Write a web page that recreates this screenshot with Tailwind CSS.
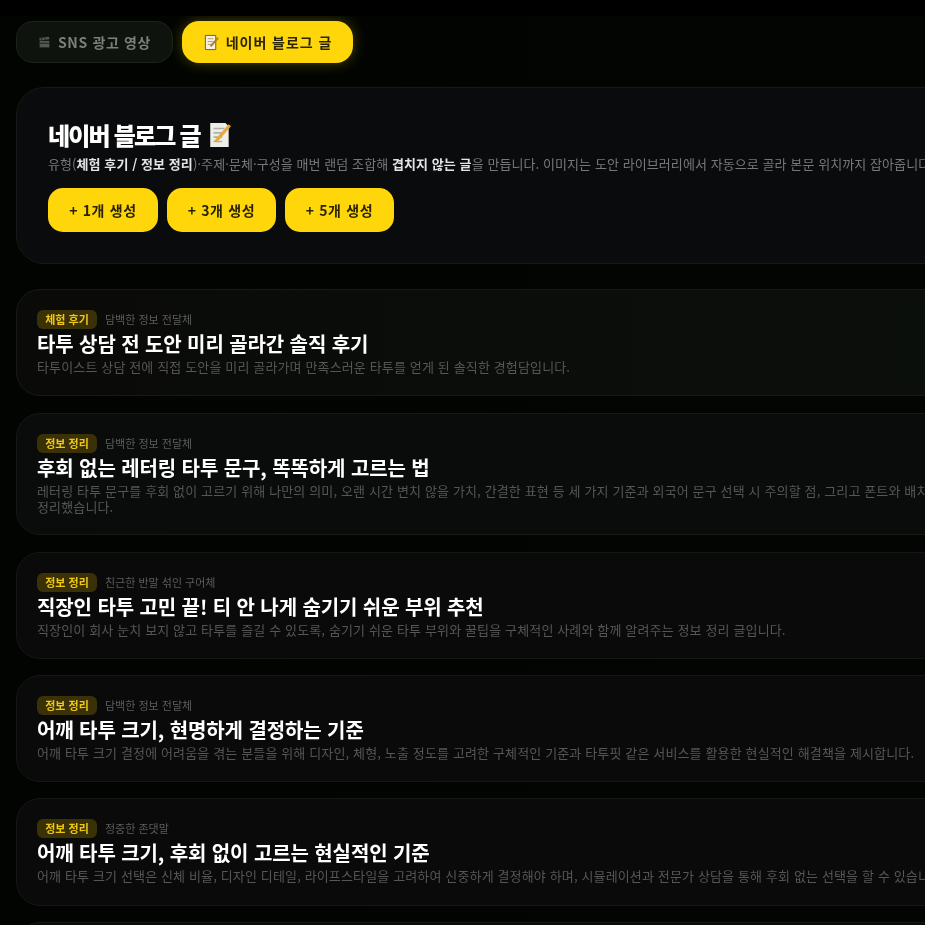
<!DOCTYPE html>
<html lang="ko">
<head>
    <meta charset="UTF-8">
    <meta name="viewport" content="width=device-width, initial-scale=1.0">
    <title>네이버 블로그 글</title>
    <script src="https://cdn.jsdelivr.net/npm/@tailwindcss/browser@4"></script>
</head>
<body class="bg-black h-[925px] overflow-hidden font-['Noto_Sans_CJK_KR','Noto_Sans',sans-serif]">
    <div class="mt-4 h-[909px] w-[1000px] bg-gradient-to-r from-[#020402] to-[#030503] pl-4 overflow-hidden blur-[0.4px]">
        <!-- tabs -->
        <div class="flex gap-[9px] pt-[5px]">
            <button class="flex items-center justify-center gap-[7px] w-[157px] h-[42px] rounded-[17px] bg-[#0e130e] border border-[#1c221c] text-[14px] tracking-[0.65px] font-bold text-[#7d7f7b]">
                <svg class="w-[13px] h-[13px] opacity-50" viewBox="0 0 16 16"><path fill="#9a9a9a" d="M2 6h12v8H2z"/><path fill="#9a9a9a" d="M1.500 2.500l12-1.500.5 3-12 1.500z"/><path stroke="#222" stroke-width="1" d="M4 2.500l1 2.500M8 2l1 2.500M2 9h12"/></svg>
                <span>SNS 광고 영상</span>
            </button>
            <button class="flex items-center justify-center gap-[6px] w-[171px] h-[42px] rounded-[17px] bg-[#ffd60a] text-[14px] tracking-[0.95px] font-bold text-[#2a2400] shadow-[0_0_14px_rgba(200,190,10,0.35)]">
                <svg class="w-[17px] h-[17px]" viewBox="0 0 18 18"><path fill="#f6f1e4" stroke="#6b5a20" d="M2.500 1.500h11v15h-11z"/><path stroke="#a89a70" d="M5 5h6M5 8h6M5 11h5"/><path stroke="#b5761c" stroke-width="2" d="M8 13l8-9"/></svg>
                <span>네이버 블로그 글</span>
            </button>
        </div>

        <!-- hero -->
        <section class="mt-6 h-[177px] rounded-[28px] bg-[#0a0b0d] border border-[#161a16] pl-[31px] pt-8">
            <h1 class="flex items-center gap-[7px] text-2xl leading-[30px] font-black tracking-[-1.8px] text-white">
                네이버 블로그 글
                <svg class="w-[26px] h-[26px]" viewBox="0 0 24 24"><path fill="#eeeee8" d="M3 1h14l3 3v19H3z"/><path stroke="#b0b0a8" stroke-width="1.500" d="M6 6h10M6 10h10M6 14h8M6 18h8"/><path stroke="#e8a93a" stroke-width="3" d="M8 18L21 3"/></svg>
            </h1>
            <p class="mt-1 text-[13px] tracking-[0.08px] leading-5 text-[#777878] whitespace-nowrap">유형(<b class="text-[#e4e4e4]">체험 후기 / 정보 정리</b>)·주제·문체·구성을 매번 랜덤 조합해 <b class="text-[#e4e4e4]">겹치지 않는 글</b>을 만듭니다. 이미지는 도안 라이브러리에서 자동으로 골라 본문 위치까지 잡아줍니다.</p>
            <div class="flex gap-[9px] mt-[14px]">
                <button class="w-[110px] h-11 rounded-[15px] bg-[#ffd60a] text-[14px] tracking-[0.65px] font-bold text-[#2a2400]">+ 1개 생성</button>
                <button class="w-[109px] h-11 rounded-[15px] bg-[#ffd60a] text-[14px] tracking-[0.65px] font-bold text-[#2a2400]">+ 3개 생성</button>
                <button class="w-[109px] h-11 rounded-[15px] bg-[#ffd60a] text-[14px] tracking-[0.65px] font-bold text-[#2a2400]">+ 5개 생성</button>
            </div>
        </section>

        <!-- list -->
        <div class="flex flex-col gap-4 mt-[25px]">
            <article class="h-[107px] mb-px rounded-3xl bg-gradient-to-r from-[#0a0b09] to-[#0b0f0b] border border-[#161a16] px-5 pt-5">
                <div class="flex items-center gap-2">
                    <span class="w-[60px] h-[19px] flex items-center justify-center rounded-md bg-[#3a3106] text-[11px] font-bold text-[#f0c814]">체험 후기</span>
                    <span class="text-[11px] text-[#5c5d5c]">담백한 정보 전달체</span>
                </div>
                <h2 class="mt-[2px] text-xl leading-[26px] tracking-[-0.1px] font-bold text-white">타투 상담 전 도안 미리 골라간 솔직 후기</h2>
                <p class="mt-[2px] text-[13px] tracking-[0.14px] leading-4 text-[#555655] whitespace-nowrap">타투이스트 상담 전에 직접 도안을 미리 골라가며 만족스러운 타투를 얻게 된 솔직한 경험담입니다.</p>
            </article>
            <article class="h-[122px] mb-px rounded-3xl bg-[#0a0b0b] border border-[#161816] px-5 pt-5">
                <div class="flex items-center gap-2">
                    <span class="w-[60px] h-[19px] flex items-center justify-center rounded-md bg-[#3a3106] text-[11px] font-bold text-[#f0c814]">정보 정리</span>
                    <span class="text-[11px] text-[#5c5d5c]">담백한 정보 전달체</span>
                </div>
                <h2 class="mt-[2px] text-xl leading-[26px] tracking-[-0.1px] font-bold text-white">후회 없는 레터링 타투 문구, 똑똑하게 고르는 법</h2>
                <p class="mt-[2px] text-[13px] tracking-[0.14px] leading-4 text-[#555655] whitespace-nowrap">레터링 타투 문구를 후회 없이 고르기 위해 나만의 의미, 오랜 시간 변치 않을 가치, 간결한 표현 등 세 가지 기준과 외국어 문구 선택 시 주의할 점, 그리고 폰트와 배치까지<br>정리했습니다.</p>
            </article>
            <article class="h-[107px] rounded-3xl bg-[#0a0a0a] border border-[#161616] px-5 pt-5">
                <div class="flex items-center gap-2">
                    <span class="w-[60px] h-[19px] flex items-center justify-center rounded-md bg-[#3a3106] text-[11px] font-bold text-[#f0c814]">정보 정리</span>
                    <span class="text-[11px] text-[#5c5d5c]">친근한 반말 섞인 구어체</span>
                </div>
                <h2 class="mt-[2px] text-xl leading-[26px] tracking-[-0.1px] font-bold text-white">직장인 타투 고민 끝! 티 안 나게 숨기기 쉬운 부위 추천</h2>
                <p class="mt-[2px] text-[13px] tracking-[0.14px] leading-4 text-[#555655] whitespace-nowrap">직장인이 회사 눈치 보지 않고 타투를 즐길 수 있도록, 숨기기 쉬운 타투 부위와 꿀팁을 구체적인 사례와 함께 알려주는 정보 정리 글입니다.</p>
            </article>
            <article class="h-[107px] rounded-3xl bg-[#0a0a0a] border border-[#161616] px-5 pt-5">
                <div class="flex items-center gap-2">
                    <span class="w-[60px] h-[19px] flex items-center justify-center rounded-md bg-[#3a3106] text-[11px] font-bold text-[#f0c814]">정보 정리</span>
                    <span class="text-[11px] text-[#5c5d5c]">담백한 정보 전달체</span>
                </div>
                <h2 class="mt-[2px] text-xl leading-[26px] tracking-[-0.1px] font-bold text-white">어깨 타투 크기, 현명하게 결정하는 기준</h2>
                <p class="mt-[2px] text-[13px] tracking-[0.14px] leading-4 text-[#555655] whitespace-nowrap">어깨 타투 크기 결정에 어려움을 겪는 분들을 위해 디자인, 체형, 노출 정도를 고려한 구체적인 기준과 타투핏 같은 서비스를 활용한 현실적인 해결책을 제시합니다.</p>
            </article>
            <article class="h-[108px] rounded-3xl bg-[#0a0a0a] border border-[#161616] px-5 pt-5">
                <div class="flex items-center gap-2">
                    <span class="w-[60px] h-[19px] flex items-center justify-center rounded-md bg-[#3a3106] text-[11px] font-bold text-[#f0c814]">정보 정리</span>
                    <span class="text-[11px] text-[#5c5d5c]">정중한 존댓말</span>
                </div>
                <h2 class="mt-[2px] text-xl leading-[26px] tracking-[-0.1px] font-bold text-white">어깨 타투 크기, 후회 없이 고르는 현실적인 기준</h2>
                <p class="mt-[2px] text-[13px] tracking-[0.14px] leading-4 text-[#555655] whitespace-nowrap">어깨 타투 크기 선택은 신체 비율, 디자인 디테일, 라이프스타일을 고려하여 신중하게 결정해야 하며, 시뮬레이션과 전문가 상담을 통해 후회 없는 선택을 할 수 있습니다.</p>
            </article>
            <article class="h-[108px] rounded-3xl bg-[#0a0a0a] border border-[#161616]"></article>
        </div>
    </div>
</body>
</html>
